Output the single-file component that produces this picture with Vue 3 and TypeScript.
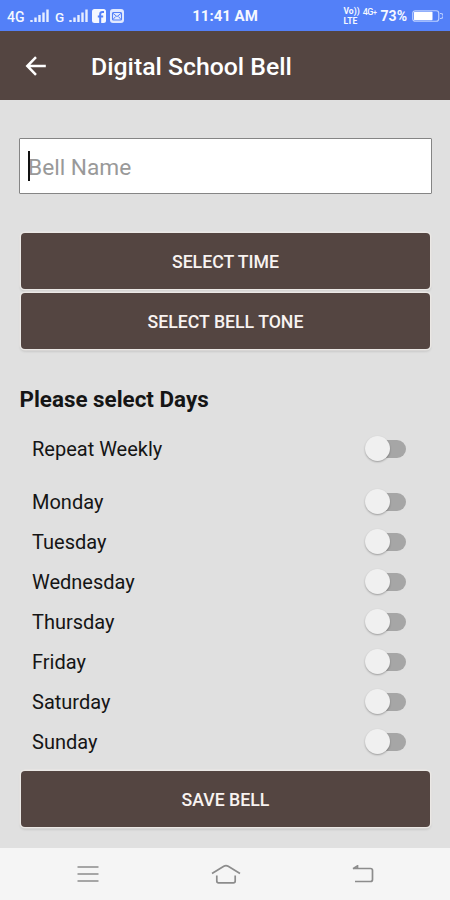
<script setup lang="ts">
import { ref } from 'vue'

interface DayOption {
  name: string
  enabled: boolean
}

const bellName = ref('')
const repeatWeekly = ref(false)
const days = ref<DayOption[]>(
  ['Monday', 'Tuesday', 'Wednesday', 'Thursday', 'Friday', 'Saturday', 'Sunday'].map((name) => ({
    name,
    enabled: false,
  })),
)
</script>

<template>
  <div class="screen">
    <header class="status">
      <div class="status-left">
        <span class="net net-4g">4G</span>
        <svg class="signal" width="19" height="14" viewBox="0 0 19 14">
          <path d="M1.5 13v-2M5.5 13V8.5M9.5 13V6M13.5 13V3.5M17.5 13V0.5" />
        </svg>
        <span class="net net-g">G</span>
        <svg class="signal" width="19" height="14" viewBox="0 0 19 14">
          <path d="M1.5 13v-2M5.5 13V8.5M9.5 13V6M13.5 13V3.5M17.5 13V0.5" />
        </svg>
        <svg class="app-icon" width="14" height="14" viewBox="0 0 14 14">
          <rect width="14" height="14" rx="2.5" fill="#f5f8ff" />
          <path d="M8.2 14V8.5M8.2 9V5.2Q8.2 3 10.5 3H12M5.8 7.6h5.4" fill="none" stroke="#5380f8" stroke-width="2" />
        </svg>
        <svg class="mail-icon" width="14" height="14" viewBox="0 0 14 14">
          <rect width="14" height="14" rx="3" fill="#e1e9ff" />
          <rect x="2.5" y="3.5" width="9" height="7.5" rx="1" fill="none" stroke="#5380f8" stroke-width="1.1" />
          <path d="M2.8 4.2 7 7.6l4.2-3.4M3 10.5l2.6-3M11 10.5l-2.6-3" fill="none" stroke="#5380f8" stroke-width="1" />
        </svg>
      </div>
      <span class="clock">11:41 AM</span>
      <div class="status-right">
        <span class="volte"><span>Vo))</span><span>LTE</span></span>
        <span class="mini-4g">4G<i>+</i></span>
        <span class="percent">73%</span>
        <svg class="battery" width="31" height="12" viewBox="0 0 31 12">
          <rect x="0.75" y="0.75" width="26" height="10.5" rx="2.5" fill="none" stroke="#bdd0ff" stroke-width="1.2" />
          <rect x="2" y="1.7" width="18.5" height="8.6" rx="0.8" fill="#fff" />
          <path d="M28 3.5h.7a1.5 1.5 0 0 1 0 5H28" fill="none" stroke="#bdd0ff" stroke-width="1.2" />
        </svg>
      </div>
    </header>

    <div class="appbar">
      <button class="back" aria-label="Back">
        <svg width="22" height="20" viewBox="0 0 22 20">
          <path d="M20.8 10H2.5M11 1.2 2.3 10l8.7 8.8" fill="none" stroke="#fff" stroke-width="2.5" />
        </svg>
      </button>
      <h1>Digital School Bell</h1>
    </div>

    <main>
      <div class="field">
        <input v-model="bellName" type="text" placeholder="Bell Name" />
        <span class="caret"></span>
      </div>

      <div class="actions">
        <button class="btn">SELECT TIME</button>
        <button class="btn">SELECT BELL TONE</button>
      </div>

      <h2>Please select Days</h2>

      <label class="row repeat">
        <span>Repeat Weekly</span>
        <input v-model="repeatWeekly" type="checkbox" />
        <span class="switch"></span>
      </label>
      <div class="days">
        <label v-for="day in days" :key="day.name" class="row">
          <span>{{ day.name }}</span>
          <input v-model="day.enabled" type="checkbox" />
          <span class="switch"></span>
        </label>
      </div>

      <button class="btn save">SAVE BELL</button>
    </main>

    <nav>
      <svg width="22" height="18" viewBox="0 0 22 18">
        <path d="M0.5 2h21M0.5 9h21M0.5 16h21" />
      </svg>
      <svg width="30" height="20" viewBox="0 0 30 20">
        <path d="M1 9.5 12.8 2.2Q15 0.9 17.2 2.2L29 9.5M5.8 11.5V17Q5.8 18.8 7.6 18.8H22.4Q24.2 18.8 24.2 17V11.5" />
      </svg>
      <svg width="22" height="18" viewBox="0 0 22 18">
        <path d="M1 3.5H18.5Q20.5 3.5 20.5 5.5V14.5Q20.5 16.5 18.5 16.5H3M1 3.8 5.5 0.9V3.5" />
      </svg>
    </nav>
  </div>
</template>

<style>
body {
  margin: 0;
}
</style>

<style scoped>
.screen {
  width: 450px;
  height: 900px;
  display: flex;
  flex-direction: column;
  overflow: hidden;
  background: #e0e0e0;
  color: #151515;
  font-family: Roboto, "Liberation Sans", sans-serif;
}
button {
  border: 0;
  padding: 0;
  font-family: inherit;
}
.status {
  height: 31px;
  flex: none;
  display: grid;
  grid-template-columns: 1fr auto 1fr;
  align-items: center;
  box-sizing: border-box;
  padding: 1px 7px 0 7px;
  background: #5380f8;
  color: #f5f8ff;
}
.status-left,
.status-right {
  display: flex;
  align-items: center;
}
.status-right {
  justify-content: flex-end;
}
.net {
  font-size: 14px;
  font-weight: 500;
  line-height: 16px;
  padding-top: 2px;
}
.net-4g {
  width: 23px;
}
.net-g {
  width: 14px;
  margin-left: 6px;
  font-size: 13.5px;
}
.signal {
  fill: none;
  stroke: #e7eeff;
  stroke-width: 2.4;
}
.app-icon {
  margin-left: 4px;
}
.mail-icon {
  margin-left: 4px;
}
.clock {
  font-size: 15px;
  font-weight: 700;
}
.volte {
  display: flex;
  flex-direction: column;
  font-size: 8.5px;
  line-height: 10px;
  font-weight: 700;
}
.mini-4g {
  font-size: 9px;
  font-weight: 500;
  line-height: 11px;
  margin: 0 4px 6px 3px;
  letter-spacing: -0.4px;
}
.mini-4g i {
  font-size: 7px;
  font-style: normal;
}
.percent {
  font-size: 14px;
  font-weight: 700;
  margin-right: 5px;
}
.appbar {
  height: 69px;
  flex: none;
  display: flex;
  align-items: center;
  box-sizing: border-box;
  padding: 3px 0 0 25px;
  background: #544541;
  color: #fff;
}
.back {
  width: 66px;
  height: 20px;
  display: flex;
  background: none;
  margin-top: -3px;
}
h1 {
  margin: 0;
  font-size: 24.8px;
  line-height: 32px;
  font-weight: 500;
}
main {
  flex: 1;
  display: flex;
  flex-direction: column;
  padding: 38px 18px 0 19px;
}
.field {
  position: relative;
  height: 56px;
  box-sizing: border-box;
  flex: none;
  border: 1.5px solid #858585;
  border-radius: 1px;
  background: #fff;
}
.field input {
  width: 100%;
  height: 100%;
  box-sizing: border-box;
  padding: 2px 8px 0;
  border: 0;
  outline: 0;
  background: none;
  font-family: inherit;
  font-size: 22.7px;
}
.field input::placeholder {
  color: #999;
  opacity: 1;
}
.caret {
  position: absolute;
  left: 8px;
  top: 12px;
  width: 2px;
  height: 30px;
  background: #111;
}
.actions {
  margin: 39px 2px 0;
  display: flex;
  flex-direction: column;
  gap: 4px;
}
.btn {
  height: 56px;
  flex: none;
  padding-top: 2px;
  border-radius: 4px;
  background: #544541;
  color: #f8f3f1;
  font-size: 17.7px;
  font-weight: 500;
  box-shadow: 0 0 0 1.5px #ebe8e5, 0 2px 3px rgba(0, 0, 0, 0.2);
}
h2 {
  margin: 35px 0 0 0.5px;
  font-size: 22.4px;
  line-height: 30px;
  font-weight: 700;
}
.row {
  height: 40px;
  display: flex;
  align-items: center;
  justify-content: space-between;
  padding: 0 26px 0 13px;
  font-size: 20px;
}
.row input {
  position: absolute;
  opacity: 0;
  pointer-events: none;
}
.repeat {
  margin: 15px 0 13px;
}
.switch {
  position: relative;
  width: 38px;
  height: 18px;
  border-radius: 9px;
  background: linear-gradient(90deg, transparent 12px, #a6a6a6 12px);
}
.switch::before {
  content: "";
  position: absolute;
  left: -3px;
  top: -4px;
  width: 25px;
  height: 25px;
  border-radius: 50%;
  background: #f0f0f0;
  box-shadow: 0 1px 2px rgba(0, 0, 0, 0.3);
}
input:checked + .switch::before {
  left: 15px;
}
.save {
  margin: 9px 2px 0;
}
nav {
  height: 52px;
  flex: none;
  display: flex;
  align-items: center;
  justify-content: space-between;
  box-sizing: border-box;
  padding: 0 76px 0 77px;
  background: #f5f5f5;
}
nav svg {
  fill: none;
  stroke: #8c8c8c;
  stroke-width: 1.7;
}
</style>
